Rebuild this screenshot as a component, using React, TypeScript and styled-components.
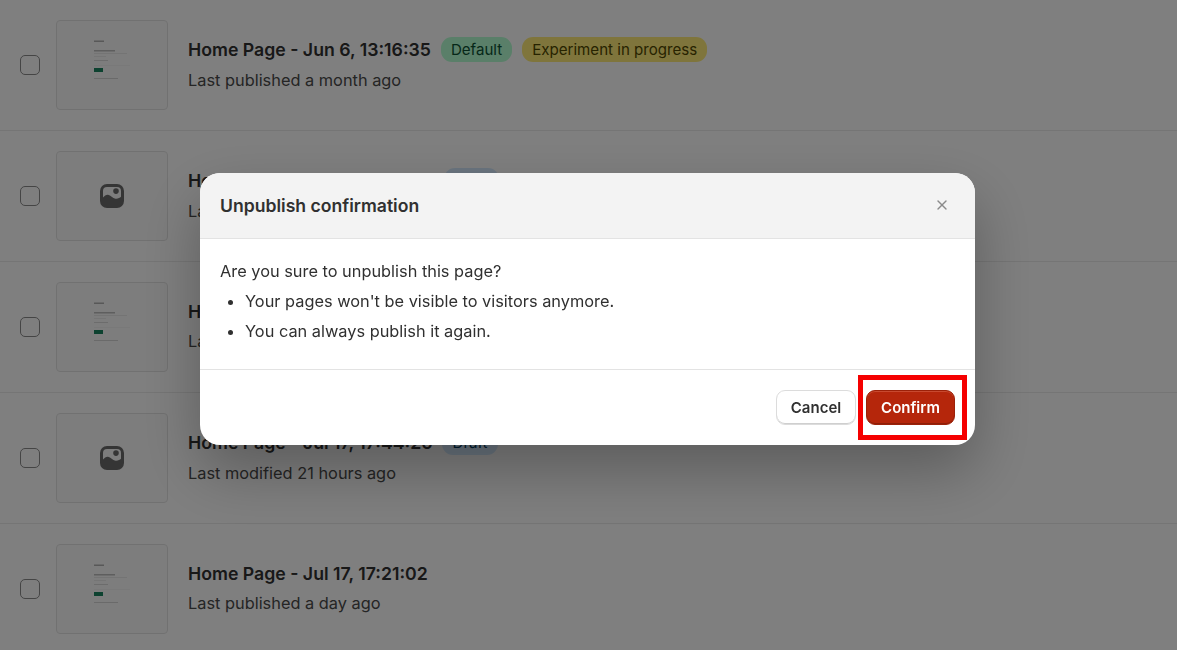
import { X } from "lucide-react";
import styled, { createGlobalStyle } from "styled-components";

const GlobalStyle = createGlobalStyle`
  html, body {
    margin: 0;
    padding: 0;
    height: 100%;
    overflow: hidden;
    background: #ffffff;
    font-family: Inter, "Liberation Sans", sans-serif;
    color: #303030;
  }
  * {
    box-sizing: border-box;
  }
`;

const List = styled.div`
  width: 100%;
  height: 650px;
  overflow: hidden;
`;

const Row = styled.div`
  display: flex;
  align-items: center;
  height: 131px;
  padding: 0 20px;
  border-bottom: 1px solid #ebebeb;
`;

const Checkbox = styled.span`
  flex: none;
  width: 20px;
  height: 20px;
  margin-right: 16px;
  background: #fdfdfd;
  border: 1px solid #8a8a8a;
  border-radius: 5px;
`;

const Thumb = styled.div`
  flex: none;
  display: flex;
  align-items: center;
  justify-content: center;
  width: 112px;
  height: 90px;
  margin-right: 20px;
  background: #fafafa;
  border: 1px solid #e3e3e3;
  border-radius: 4px;
`;

const Info = styled.div`
  display: flex;
  flex-direction: column;
  gap: 6px;
  padding-bottom: 1px;
`;

const TitleLine = styled.div`
  display: flex;
  align-items: center;
  min-height: 22px;
`;

const Title = styled.span`
  font-size: 17.7px;
  line-height: 22px;
  font-weight: 600;
  color: #303030;
`;

const Badge = styled.span<{ $bg: string; $fg: string }>`
  display: inline-flex;
  align-items: center;
  height: 25px;
  margin-left: 10px;
  padding: 0 10px;
  border-radius: 11px;
  font-size: 15.1px;
  background: ${({ $bg }) => $bg};
  color: ${({ $fg }) => $fg};
`;

const Meta = styled.span`
  font-size: 16.35px;
  line-height: 24px;
  color: #4a4a4a;
`;

const Backdrop = styled.div`
  position: fixed;
  inset: 0;
  display: flex;
  justify-content: center;
  padding: 173px 2px 0 0;
  background: rgba(0, 0, 0, 0.5);
`;

const Modal = styled.div`
  position: relative;
  width: 775px;
  height: 272px;
  background: #ffffff;
  border-radius: 20px;
  box-shadow: 0 26px 60px rgba(0, 0, 0, 0.28);
`;

const ModalHeader = styled.div`
  display: flex;
  align-items: center;
  justify-content: space-between;
  height: 66px;
  padding: 0 25px 1px 20px;
  background: #f3f3f3;
  border-bottom: 1px solid #e3e3e3;
  border-radius: 20px 20px 0 0;
`;

const ModalTitle = styled.h2`
  margin: 0;
  font-size: 17.6px;
  font-weight: 600;
  color: #303030;
`;

const CloseButton = styled.button`
  display: flex;
  padding: 0;
  border: none;
  background: none;
  color: #8a8a8a;
`;

const ModalBody = styled.div`
  height: 131px;
  padding: 17px 20px 0;
  border-bottom: 1px solid #e3e3e3;
  font-size: 16.35px;
  line-height: 30px;
  color: #303030;
`;

const Bullets = styled.ul`
  margin: 0;
  padding: 0 0 0 25px;
`;

const ModalFooter = styled.div`
  display: flex;
  justify-content: flex-end;
  gap: 10px;
  padding: 20px 20px 0;
`;

const FooterButton = styled.button<{ $primary?: boolean }>`
  height: 35px;
  padding: 0;
  width: ${({ $primary }) => ($primary ? "89px" : "80px")};
  border-radius: 9px;
  font-family: inherit;
  font-size: 15px;
  font-weight: 600;
  color: ${({ $primary }) => ($primary ? "#ffffff" : "#303030")};
  background: ${({ $primary }) => ($primary ? "#b5260b" : "#ffffff")};
  border: 1px solid ${({ $primary }) => ($primary ? "#9c2109" : "#dcdcdc")};
  box-shadow: ${({ $primary }) =>
    $primary
      ? "inset 0 -1px 0 #8e1f08, inset 0 1px 0 #c8492f"
      : "inset 0 -1px 0 #cfcfcf"};
`;

const Highlight = styled.div`
  position: absolute;
  left: 658px;
  top: 202px;
  width: 109px;
  height: 65px;
  border: 5px solid #f50000;
  pointer-events: none;
`;

function PagePreview() {
  return (
    <svg width="110" height="88" viewBox="0 0 110 88" aria-hidden="true">
      <rect x="37" y="19.500" width="10" height="1.500" fill="#b0b0b0" />
      <rect x="37" y="29" width="21" height="1.500" fill="#bcbcbc" />
      <rect x="37" y="32" width="33" height="1" fill="#e8e8e8" />
      <rect x="37" y="35" width="12" height="1" fill="#ebebeb" />
      <rect x="37" y="39" width="14" height="1" fill="#d8d8d8" />
      <rect x="37" y="44" width="36" height="1" fill="#f2f2f2" />
      <rect x="37" y="47" width="9" height="4" fill="#1a8460" />
      <rect x="37" y="57" width="24" height="1" fill="#d4d4d4" />
    </svg>
  );
}

function ImageIcon() {
  return (
    <svg width="24" height="24" viewBox="0 0 24 24" aria-hidden="true">
      <path
        fillRule="evenodd"
        fill="#6b6b6b"
        d="M7 0h10a7 7 0 0 1 7 7v10a7 7 0 0 1-7 7H7a7 7 0 0 1-7-7V7a7 7 0 0 1 7-7ZM7 3a4 4 0 0 0-4 4v6.500c1.500-1.600 3.200-2.900 5-2.700 2.800.300 4.500 3.500 7.500 3.900 2.400.300 4.200-.700 5.500-1.900V7a4 4 0 0 0-4-4H7Zm9 1.300a2.800 2.800 0 1 1 0 5.600 2.800 2.800 0 0 1 0-5.600Z"
      />
    </svg>
  );
}

const pages = [
  {
    title: "Home Page - Jun 6, 13:16:35",
    meta: "Last published a month ago",
    preview: true,
    badges: [
      { label: "Default", bg: "#b4fed2", fg: "#0c5132" },
      { label: "Experiment in progress", bg: "#ffeb78", fg: "#4f4700" },
    ],
  },
  {
    title: "Home Page - Jul 17, 18:08:36",
    meta: "Last modified 21 hours ago",
    preview: false,
    badges: [{ label: "Draft", bg: "#d5ebff", fg: "#003a5a" }],
  },
  {
    title: "Home Page - Jul 17, 17:30:12",
    meta: "Last published a day ago",
    preview: true,
    badges: [],
  },
  {
    title: "Home Page - Jul 17, 17:44:26",
    meta: "Last modified 21 hours ago",
    preview: false,
    badges: [{ label: "Draft", bg: "#d5ebff", fg: "#003a5a" }],
  },
  {
    title: "Home Page - Jul 17, 17:21:02",
    meta: "Last published a day ago",
    preview: true,
    badges: [],
  },
];

function App() {
  return (
    <>
      <GlobalStyle />
      <List>
        {pages.map((page, index) => (
          <Row key={index}>
            <Checkbox />
            <Thumb>{page.preview ? <PagePreview /> : <ImageIcon />}</Thumb>
            <Info>
              <TitleLine>
                <Title>{page.title}</Title>
                {page.badges.map((badge) => (
                  <Badge key={badge.label} $bg={badge.bg} $fg={badge.fg}>
                    {badge.label}
                  </Badge>
                ))}
              </TitleLine>
              <Meta>{page.meta}</Meta>
            </Info>
          </Row>
        ))}
      </List>
      <Backdrop>
        <Modal>
          <ModalHeader>
            <ModalTitle>Unpublish confirmation</ModalTitle>
            <CloseButton aria-label="Close">
              <X size={16} strokeWidth={2} />
            </CloseButton>
          </ModalHeader>
          <ModalBody>
            Are you sure to unpublish this page?
            <Bullets>
              <li>Your pages won't be visible to visitors anymore.</li>
              <li>You can always publish it again.</li>
            </Bullets>
          </ModalBody>
          <ModalFooter>
            <FooterButton>Cancel</FooterButton>
            <FooterButton $primary>Confirm</FooterButton>
          </ModalFooter>
          <Highlight />
        </Modal>
      </Backdrop>
    </>
  );
}

export default App;
